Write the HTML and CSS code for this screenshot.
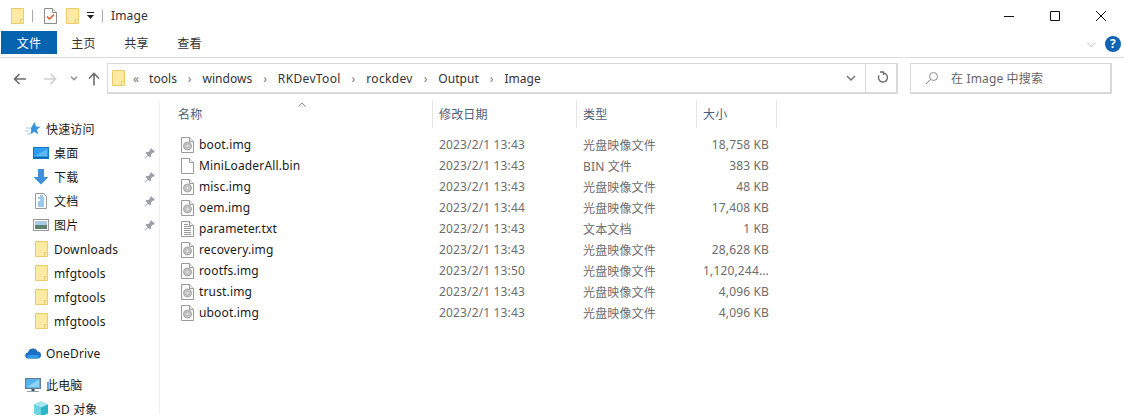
FILE: index.html
```html
<!DOCTYPE html>
<html lang="zh-CN">
<head>
<meta charset="utf-8">
<title>Image</title>
<link rel="stylesheet" href="styles.css">
</head>
<body>
<svg class="defs" width="0" height="0">
  <defs>
    <symbol id="folder" viewBox="0 0 13 16">
      <path d="M.5.5h12v15H.5z" fill="#ffe9a3" stroke="#eecb66"/>
      <path d="M9.5 15.5v-4h3" fill="#fff3c9" stroke="#eecb66"/>
    </symbol>
    <symbol id="disc" viewBox="0 0 13 16">
      <path d="M.5.5h8l4 4v11H.5z" fill="#fdfdfd" stroke="#9a9a9a"/>
      <path d="M8.5.5v4h4" fill="#eee" stroke="#9a9a9a"/>
      <circle cx="6.5" cy="9" r="4" fill="#c2c2c2" stroke="#a8a8a8"/>
      <circle cx="6.5" cy="9" r="1" fill="#eee"/>
    </symbol>
    <symbol id="blank" viewBox="0 0 13 16">
      <path d="M.5.5h8l4 4v11H.5z" fill="#fff" stroke="#9a9a9a"/>
      <path d="M8.5.5v4h4" fill="#f3f3f3" stroke="#9a9a9a"/>
    </symbol>
    <symbol id="text" viewBox="0 0 13 16">
      <path d="M.5.5h8l4 4v11H.5z" fill="#fff" stroke="#9a9a9a"/>
      <path d="M8.5.5v4h4" fill="#f3f3f3" stroke="#9a9a9a"/>
      <path d="M3 3.5h4M3 5.5h7M3 7.5h7M3 9.5h7M3 11.5h7M3 13.5h7" stroke="#9c9c9c"/>
    </symbol>
    <symbol id="pin" viewBox="0 0 12 12">
      <path d="M7 1l4 4-1 .6-1 0-2 2 0 2-1 1-2-2-3 3-.6-.6 3-3-2-2 1-1 2 0 2-2 0-1z" fill="#9aa0a5"/>
    </symbol>
  </defs>
</svg>

<header class="titlebar">
  <svg class="ti ti-a"><use href="#folder"/></svg>
  <span class="qsep qsep-a"></span>
  <svg class="ti ti-b" viewBox="0 0 13 16">
    <path d="M.5.5h8l4 4v11H.5z" fill="#fff" stroke="#8c8c8c"/>
    <path d="M8.5.5v4h4" fill="#f3f3f3" stroke="#8c8c8c"/>
    <path d="M3 8.500l2.500 2.500L10 6.500" fill="none" stroke="#e2562a" stroke-width="1.500"/>
  </svg>
  <svg class="ti ti-c"><use href="#folder"/></svg>
  <svg class="qdrop" viewBox="0 0 7 7"><path d="M0 0h7v1H0zM0 3h7L3.500 7z" fill="#222"/></svg>
  <span class="qsep qsep-b"></span>
  <span class="wintitle">Image</span>
  <div class="winbtns">
    <svg class="wb" viewBox="0 0 46 30"><path d="M18 15.500h10" stroke="#111" fill="none"/></svg>
    <svg class="wb" viewBox="0 0 46 30"><path d="M18.500 10.500h9v9h-9z" stroke="#111" fill="none"/></svg>
    <svg class="wb" viewBox="0 0 46 30"><path d="M18 10l10 10M28 10L18 20" stroke="#111" fill="none"/></svg>
  </div>
</header>

<nav class="ribbon">
  <span class="tab tab-file">文件</span>
  <span class="tab">主页</span>
  <span class="tab">共享</span>
  <span class="tab">查看</span>
  <svg class="rib-chev" viewBox="0 0 10 6"><path d="M.5.500L5 5 9.500.500" fill="none" stroke="#b5b5b5"/></svg>
  <span class="help">?</span>
</nav>

<div class="navbar">
  <div class="navbtns">
    <svg class="nb nb-back" viewBox="0 0 14 12"><path d="M13 6H2M6.500 1L1.500 6l5 5" fill="none" stroke="#6d6d6d" stroke-width="1.600"/></svg>
    <svg class="nb nb-fwd" viewBox="0 0 14 12"><path d="M1 6h11M7.500 1l5 5-5 5" fill="none" stroke="#cfcfcf" stroke-width="1.600"/></svg>
    <svg class="nb-chev" viewBox="0 0 8 5"><path d="M1 .8l3 3 3-3" fill="none" stroke="#8a8a8a" stroke-width="1.300"/></svg>
    <svg class="nb nb-up" viewBox="0 0 12 14"><path d="M6 13.500V2M1 6.500l5-5 5 5" fill="none" stroke="#6d6d6d" stroke-width="1.600"/></svg>
  </div>
  <div class="address">
    <svg class="addr-folder"><use href="#folder"/></svg>
    <span class="crumb crumb-more">«</span>
    <span class="crumb">tools</span><span class="sep">›</span>
    <span class="crumb">windows</span><span class="sep">›</span>
    <span class="crumb crumb-wide">RKDevTool</span><span class="sep">›</span>
    <span class="crumb crumb-wide">rockdev</span><span class="sep">›</span>
    <span class="crumb">Output</span><span class="sep">›</span>
    <span class="crumb">Image</span>
    <span class="addr-drop"><svg class="addr-chev" viewBox="0 0 10 6"><path d="M1 1l4 4 4-4" fill="none" stroke="#6d6d6d" stroke-width="1.400"/></svg></span>
    <span class="addr-refresh"><svg class="refresh" viewBox="0 0 12 14"><path d="M3 1h3.500v3M6 2a4.500 4.500 0 1 1-4 2.300" fill="none" stroke="#6d6d6d" stroke-width="1.400"/></svg></span>
  </div>
  <div class="search">
    <svg class="search-ico" viewBox="0 0 14 14"><circle cx="8.500" cy="5.500" r="4" fill="none" stroke="#8a8a8a"/><path d="M5.500 8.500L1 13" stroke="#8a8a8a" fill="none"/></svg>
    <span>在 Image 中搜索</span>
  </div>
</div>

<main class="main">
  <aside class="sidebar">
    <div class="nav-item head">
      <svg class="ni" viewBox="0 0 16 16"><path d="M9.500 1l1.500 4.500 4.500.3-3.500 3 1.200 4.700-4-2.700-4 2.700 1.200-4.700-1-.9z" fill="#3a94de"/><path d="M1 7h4M0 10h4M2 13h3" stroke="#9ccbf0"/></svg>
      <span>快速访问</span>
    </div>
    <div class="nav-item">
      <svg class="ni" viewBox="0 0 16 16"><rect x=".5" y="2.500" width="15" height="11" fill="#2f9bec" stroke="#1479c9"/><path d="M1 12.500h14" stroke="#0d5fa6"/><path d="M2 11l12-7v7z" fill="#5cb8f5"/></svg>
      <span>桌面</span>
      <svg class="pin"><use href="#pin"/></svg>
    </div>
    <div class="nav-item">
      <svg class="ni" viewBox="0 0 16 16"><path d="M5 0h6v8h4.500L8 15.500.5 8H5z" fill="#3f8fdc"/></svg>
      <span>下载</span>
      <svg class="pin"><use href="#pin"/></svg>
    </div>
    <div class="nav-item">
      <svg class="ni" viewBox="0 0 16 16"><path d="M2.500.5h8l3 3v12h-11z" fill="#fff" stroke="#9a9a9a"/><path d="M7 3h3M5 5h6M7 7h4M5 9h6M5 11h6M5 13h6" stroke="#3d8fd0"/></svg>
      <span>文档</span>
      <svg class="pin"><use href="#pin"/></svg>
    </div>
    <div class="nav-item">
      <svg class="ni" viewBox="0 0 16 16"><rect x=".5" y="2.500" width="15" height="11" fill="#fff" stroke="#9a9a9a"/><rect x="2" y="4" width="12" height="4" fill="#a9cbe6"/><rect x="2" y="8" width="12" height="4" fill="#5f7f70"/></svg>
      <span>图片</span>
      <svg class="pin"><use href="#pin"/></svg>
    </div>
    <div class="nav-item"><svg class="ni ni-folder"><use href="#folder"/></svg><span>Downloads</span></div>
    <div class="nav-item"><svg class="ni ni-folder"><use href="#folder"/></svg><span>mfgtools</span></div>
    <div class="nav-item"><svg class="ni ni-folder"><use href="#folder"/></svg><span>mfgtools</span></div>
    <div class="nav-item"><svg class="ni ni-folder"><use href="#folder"/></svg><span>mfgtools</span></div>
    <div class="nav-item head gap">
      <svg class="ni" viewBox="0 0 16 12"><path d="M3.500 11.500a3 3 0 0 1-.5-6 5 5 0 0 1 9.500-1 3.500 3.500 0 0 1 0 7z" fill="#1c6fc4"/><path d="M3.500 11.500a2 2 0 0 1 0-3.500h10a2.500 2.500 0 0 1-1 3.500z" fill="#2f9ae6"/></svg>
      <span>OneDrive</span>
    </div>
    <div class="nav-item head gap">
      <svg class="ni" viewBox="0 0 16 16"><rect x=".5" y="1.500" width="15" height="10" fill="#4fb4ee" stroke="#6a7d8c"/><path d="M2 10l11-7h1v7z" fill="#8fd3f7"/><path d="M6.500 12h3v2h-3zM2 14.500h12" stroke="#8fa1ae"/></svg>
      <span>此电脑</span>
    </div>
    <div class="nav-item">
      <svg class="ni" viewBox="0 0 16 16"><path d="M8 .5l7 3v9l-7 3-7-3v-9z" fill="#2bb6c8"/><path d="M8 .5l7 3-7 3-7-3z" fill="#a7e6ee"/><path d="M8 6.500v9l-7-3v-9z" fill="#6fd3df"/></svg>
      <span>3D 对象</span>
    </div>
  </aside>

  <section class="files">
    <svg class="sort-arrow" viewBox="0 0 8 5"><path d="M.5 4.500L4 1l3.500 3.500" fill="none" stroke="#8a8a8a"/></svg>
    <div class="cols cols-head">
      <span class="hcell">名称</span>
      <span class="hcell">修改日期</span>
      <span class="hcell">类型</span>
      <span class="hcell">大小</span>
    </div>
    <div class="rows">
      <div class="cols row"><span class="name"><svg class="fi"><use href="#disc"/></svg>boot.img</span><span class="meta">2023/2/1 13:43</span><span class="meta">光盘映像文件</span><span class="meta size">18,758 KB</span></div>
      <div class="cols row"><span class="name"><svg class="fi"><use href="#blank"/></svg>MiniLoaderAll.bin</span><span class="meta">2023/2/1 13:43</span><span class="meta">BIN 文件</span><span class="meta size">383 KB</span></div>
      <div class="cols row"><span class="name"><svg class="fi"><use href="#disc"/></svg>misc.img</span><span class="meta">2023/2/1 13:43</span><span class="meta">光盘映像文件</span><span class="meta size">48 KB</span></div>
      <div class="cols row"><span class="name"><svg class="fi"><use href="#disc"/></svg>oem.img</span><span class="meta">2023/2/1 13:44</span><span class="meta">光盘映像文件</span><span class="meta size">17,408 KB</span></div>
      <div class="cols row"><span class="name"><svg class="fi"><use href="#text"/></svg>parameter.txt</span><span class="meta">2023/2/1 13:43</span><span class="meta">文本文档</span><span class="meta size">1 KB</span></div>
      <div class="cols row"><span class="name"><svg class="fi"><use href="#disc"/></svg>recovery.img</span><span class="meta">2023/2/1 13:43</span><span class="meta">光盘映像文件</span><span class="meta size">28,628 KB</span></div>
      <div class="cols row"><span class="name"><svg class="fi"><use href="#disc"/></svg>rootfs.img</span><span class="meta">2023/2/1 13:50</span><span class="meta">光盘映像文件</span><span class="meta size">1,120,244...</span></div>
      <div class="cols row"><span class="name"><svg class="fi"><use href="#disc"/></svg>trust.img</span><span class="meta">2023/2/1 13:43</span><span class="meta">光盘映像文件</span><span class="meta size">4,096 KB</span></div>
      <div class="cols row"><span class="name"><svg class="fi"><use href="#disc"/></svg>uboot.img</span><span class="meta">2023/2/1 13:43</span><span class="meta">光盘映像文件</span><span class="meta size">4,096 KB</span></div>
    </div>
  </section>
</main>
</body>
</html>
```
FILE: styles.css
```css
* { box-sizing: border-box; }
html, body {
  margin: 0;
  height: 416px;
  overflow: hidden;
  background: #fff;
}
body {
  font-family: "Noto Sans", "Noto Sans CJK SC", sans-serif;
  font-size: 12px;
  letter-spacing: .15px;
  color: #1a1a1a;
}
.defs { display: block; height: 0; }

/* title bar */
.titlebar {
  display: flex;
  align-items: center;
  height: 31px;
}
.ti { width: 13px; height: 16px; flex: none; }
.ti-a { margin-left: 11px; }
.qsep { width: 1px; height: 12px; background: #a9a9a9; flex: none; }
.qsep-a { margin-left: 8px; }
.ti-b { margin-left: 11px; }
.ti-c { margin-left: 9px; }
.qdrop { width: 7px; height: 7px; margin-left: 8px; flex: none; }
.qsep-b { margin-left: 8px; }
.wintitle { margin-left: 8px; color: #333; }
.winbtns { display: flex; margin-left: auto; }
.wb { width: 46px; height: 30px; }

/* ribbon */
.ribbon {
  display: flex;
  align-items: flex-start;
  height: 27px;
  border-bottom: 1px solid #dadbdc;
}
.tab {
  width: 53px;
  height: 23px;
  line-height: 25px;
  text-align: center;
  color: #333;
}
.tab-file {
  width: 56px;
  margin-left: 1px;
  background: #0563af;
  color: #fff;
}
.rib-chev { width: 9px; height: 6px; margin: 11px 0 0 auto; }
.help {
  width: 16px;
  height: 16px;
  margin: 5px 3px 0 9px;
  border-radius: 50%;
  background: #0f62b4;
  color: #fff;
  font-weight: 700;
  font-size: 12px;
  line-height: 16px;
  text-align: center;
}

/* nav bar */
.navbar {
  display: flex;
  align-items: stretch;
  height: 42px;
  padding: 5px 12px 6px 0;
}
.navbtns {
  display: flex;
  align-items: center;
  width: 107px;
  flex: none;
}
.nb { flex: none; }
.nb-back { width: 14px; height: 12px; margin-left: 13px; }
.nb-fwd { width: 14px; height: 12px; margin-left: 16px; }
.nb-chev { width: 8px; height: 5px; margin-left: 13px; flex: none; }
.nb-up { width: 12px; height: 14px; margin-left: 10px; }
.address {
  display: flex;
  align-items: center;
  width: 791px;
  flex: none;
  border: 1px solid #d9d9d9;
  border-width: 1px 2px 2px 1px;
  color: #333;
}
.addr-folder { width: 13px; height: 16px; margin-left: 4px; flex: none; }
.crumb { flex: none; letter-spacing: .05px; }
.crumb-wide { letter-spacing: .35px; }
.crumb-more { width: 16px; margin-left: 8px; color: #777; }
.sep { width: 25.5px; text-align: center; color: #777; flex: none; }
.addr-drop {
  display: flex;
  align-items: center;
  justify-content: center;
  width: 30px;
  height: 100%;
  margin-left: auto;
  border-right: 1px solid #d9d9d9;
}
.addr-chev { width: 10px; height: 6px; }
.addr-refresh {
  display: flex;
  align-items: center;
  justify-content: center;
  width: 30px;
  height: 100%;
  padding-left: 3px;
}
.refresh { width: 12px; height: 14px; }
.search {
  display: flex;
  align-items: center;
  flex: 1;
  margin-left: 12px;
  border: 1px solid #d9d9d9;
  border-width: 1px 2px 2px 1px;
  color: #666;
}
.search-ico { width: 14px; height: 14px; margin: 0 12px 0 14px; flex: none; }

/* main */
.main { display: flex; height: 315px; overflow: hidden; position: relative; }
.sidebar {
  width: 160px;
  flex: none;
  padding-top: 17px;
  border-right: 1px solid #f0f0f0;
}
.nav-item {
  display: flex;
  align-items: center;
  height: 24px;
  padding-left: 33px;
  color: #1a1a1a;
}
.ni { width: 16px; height: 16px; margin-right: 5px; flex: none; }
.ni-folder { width: 13px; margin-left: 2px; margin-right: 6px; }
.head { padding-left: 25px; }
.gap { margin-top: 8px; }
.pin { width: 12px; height: 12px; margin-left: auto; margin-right: 3px; flex: none; }

/* files */
.files { flex: 1; position: relative; }
.sort-arrow { position: absolute; left: 138px; top: 2px; width: 8px; height: 5px; }
.cols {
  display: grid;
  grid-template-columns: 273px 144px 120px 80px;
}
.cols-head { height: 28px; }
.hcell {
  display: flex;
  align-items: center;
  padding-left: 6px;
  border-right: 1px solid #e5e5e5;
  color: #4c607a;
}
.hcell:first-child { padding-left: 18px; }
.rows { padding-top: 6px; }
.row { height: 21px; align-items: center; }
.name { display: flex; align-items: center; padding-left: 21px; color: #1a1a1a; }
.fi { width: 13px; height: 16px; margin-right: 5px; flex: none; }
.meta { padding-left: 6px; color: #6d6d6d; }
.size { text-align: right; padding-right: 8px; padding-left: 0; }
```
